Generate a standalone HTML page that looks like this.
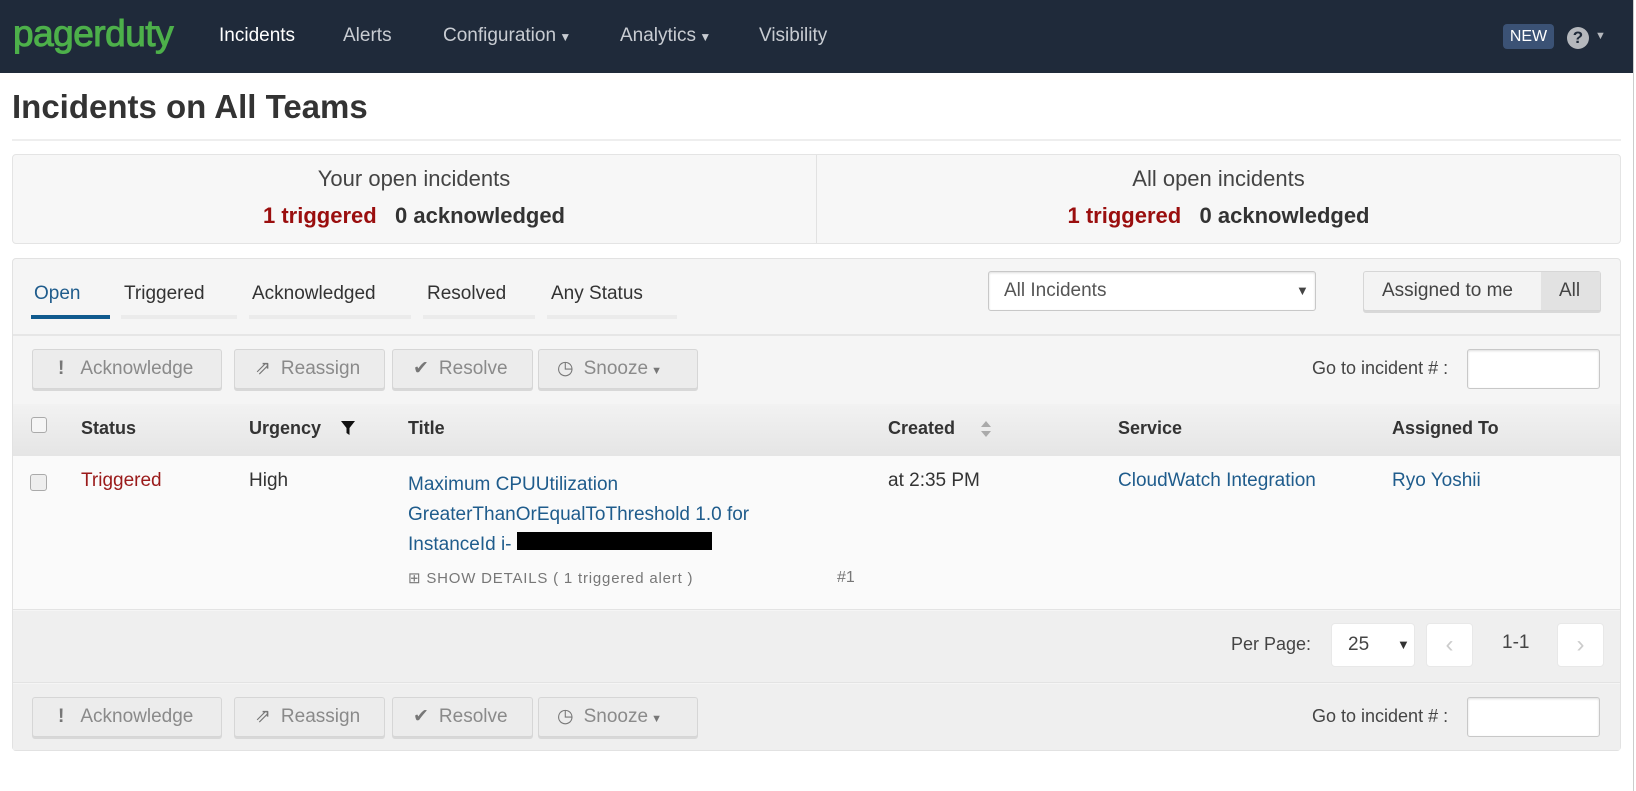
<!DOCTYPE html>
<html><head><meta charset="utf-8"><style>
*{box-sizing:border-box;margin:0;padding:0}
body{width:1636px;height:791px;background:#fff;font-family:"Liberation Sans",sans-serif;color:#333;position:relative;overflow:hidden;font-size:19px}
.a{position:absolute;white-space:nowrap}
.nav{position:absolute;left:0;top:0;width:1633px;height:73px;background:#1f2a3a}
.nl{color:#c8ccd2;font-size:19px;top:25px}
.btn{position:absolute;height:40px;border:1px solid #d6d6d6;border-radius:3px;background:#ececec;box-shadow:0 2px 0 #d8d8d8;color:#8a8a8a;font-size:19px;line-height:38px}
.inp{position:absolute;background:#fff;border:1px solid #c8c8c8;border-radius:3px;box-shadow:inset 0 1px 2px #ddd}
.th{top:418px;font-weight:bold;font-size:18px;color:#333}
.lk{color:#1f5c8c}
</style></head><body>
<div class="nav"></div>
<div class="a" style="left:13px;top:13px;font-size:37px;color:#4db04a;letter-spacing:-0.5px;-webkit-text-stroke:1px #4db04a">pagerduty</div>
<div class="a nl" style="left:219px;color:#fff">Incidents</div>
<div class="a nl" style="left:343px">Alerts</div>
<div class="a nl" style="left:443px">Configuration<span style="font-size:12px"> ▼</span></div>
<div class="a nl" style="left:620px">Analytics<span style="font-size:12px"> ▼</span></div>
<div class="a nl" style="left:759px">Visibility</div>
<div class="a" style="left:1503px;top:24px;width:51px;height:25px;background:#3b5275;border-radius:4px;color:#fff;font-size:16px;text-align:center;line-height:25px">NEW</div>
<div class="a" style="left:1567px;top:27px;width:22px;height:22px;border-radius:50%;background:#b5b8bd;color:#1f2a3a;font-weight:bold;font-size:17px;text-align:center;line-height:22px">?</div>
<div class="a" style="left:1595px;top:30px;font-size:11px;color:#b5b8bd">▼</div>

<div class="a" style="left:12px;top:88px;font-size:33px;font-weight:bold;color:#333">Incidents on All Teams</div>
<div class="a" style="left:12px;top:139px;width:1609px;height:2px;background:#eee"></div>

<div class="a" style="left:12px;top:154px;width:1609px;height:90px;border:1px solid #e4e4e4;border-radius:4px;background:#f7f7f7"></div>
<div class="a" style="left:816px;top:155px;width:1px;height:88px;background:#e2e2e2"></div>
<div class="a" style="left:12px;top:166px;width:804px;text-align:center;font-size:22px;color:#444">Your open incidents</div>
<div class="a" style="left:12px;top:203px;width:804px;text-align:center;font-size:22px;font-weight:bold"><span style="color:#9a0e0e">1 triggered</span>&nbsp;&nbsp; <span>0 acknowledged</span></div>
<div class="a" style="left:816px;top:166px;width:805px;text-align:center;font-size:22px;color:#444">All open incidents</div>
<div class="a" style="left:816px;top:203px;width:805px;text-align:center;font-size:22px;font-weight:bold"><span style="color:#9a0e0e">1 triggered</span>&nbsp;&nbsp; <span>0 acknowledged</span></div>

<div class="a" style="left:12px;top:258px;width:1609px;height:493px;border:1px solid #e2e2e2;border-radius:4px;background:#f5f5f5"></div>
<div class="a" style="left:13px;top:334px;width:1607px;height:2px;background:#e6e6e6"></div>
<div class="a" style="left:34px;top:283px;color:#1f5c8c">Open</div>
<div class="a" style="left:31px;top:315px;width:79px;height:4px;background:#105a8e"></div>
<div class="a" style="left:124px;top:283px">Triggered</div>
<div class="a" style="left:121px;top:315px;width:116px;height:4px;background:#ebebeb"></div>
<div class="a" style="left:252px;top:283px">Acknowledged</div>
<div class="a" style="left:249px;top:315px;width:162px;height:4px;background:#ebebeb"></div>
<div class="a" style="left:427px;top:283px">Resolved</div>
<div class="a" style="left:423px;top:315px;width:112px;height:4px;background:#ebebeb"></div>
<div class="a" style="left:551px;top:283px">Any Status</div>
<div class="a" style="left:547px;top:315px;width:130px;height:4px;background:#ebebeb"></div>

<div class="inp" style="left:988px;top:271px;width:328px;height:40px"></div>
<div class="a" style="left:1004px;top:280px;color:#555">All Incidents</div>
<div class="a" style="left:1296px;top:283px;font-size:13px;color:#444">▼</div>
<div class="btn" style="left:1363px;top:271px;width:238px;color:#444;background:#f3f3f3"></div>
<div class="a" style="left:1382px;top:280px;color:#444">Assigned to me</div>
<div class="a" style="left:1541px;top:272px;width:59px;height:38px;background:#e2e2e2"></div>
<div class="a" style="left:1559px;top:280px;color:#444">All</div>

<div class="btn" style="left:32px;top:349px;width:190px"><b style="margin-left:25px;color:#777">!</b><span style="margin-left:16px">Acknowledge</span></div>
<div class="btn" style="left:234px;top:349px;width:151px"><span style="margin-left:20px;color:#777">⇗</span><span style="margin-left:10px">Reassign</span></div>
<div class="btn" style="left:392px;top:349px;width:141px"><span style="margin-left:20px;color:#777">✔</span><span style="margin-left:10px">Resolve</span></div>
<div class="btn" style="left:538px;top:349px;width:160px"><span style="margin-left:18px;color:#777">◷</span><span style="margin-left:10px">Snooze</span><span style="font-size:11px;color:#777"> ▼</span></div>
<div class="a" style="left:1312px;top:358px;color:#444;font-size:18px">Go to incident # :</div>
<div class="inp" style="left:1467px;top:349px;width:133px;height:40px"></div>

<div class="a" style="left:13px;top:404px;width:1607px;height:52px;background:linear-gradient(#f2f2f2,#e5e5e5)"></div>
<div class="a" style="left:31px;top:417px;width:16px;height:16px;border:1px solid #aaa;border-radius:3px;background:#f5f5f5"></div>
<div class="a th" style="left:81px">Status</div>
<div class="a th" style="left:249px">Urgency</div>
<svg class="a" style="left:340px;top:420px" width="16" height="16" viewBox="0 0 16 16"><path d="M1 1H15L9.5 8V15L6.5 13V8Z" fill="#111"/></svg>
<div class="a th" style="left:408px">Title</div>
<div class="a th" style="left:888px">Created</div>
<svg class="a" style="left:980px;top:420px" width="12" height="18" viewBox="0 0 12 18"><path d="M6 1L11 7H1Z M6 17L11 11H1Z" fill="#aaa"/></svg>
<div class="a th" style="left:1118px">Service</div>
<div class="a th" style="left:1392px">Assigned To</div>

<div class="a" style="left:13px;top:456px;width:1607px;height:154px;background:#fafafa;border-bottom:1px solid #e3e3e3"></div>
<div class="a" style="left:30px;top:474px;width:17px;height:17px;border:1px solid #aaa;border-radius:3px;background:#eee"></div>
<div class="a" style="left:81px;top:470px;color:#9a1a1a">Triggered</div>
<div class="a" style="left:249px;top:470px">High</div>
<div class="a lk" style="left:408px;top:470px;line-height:30px">Maximum CPUUtilization<br>GreaterThanOrEqualToThreshold 1.0 for<br>InstanceId i-</div>
<div class="a" style="left:517px;top:532px;width:195px;height:18px;background:#000"></div>
<div class="a" style="left:408px;top:569px;font-size:15px;color:#777;letter-spacing:0.8px">⊞ SHOW DETAILS ( 1 triggered alert )</div>
<div class="a" style="left:837px;top:569px;font-size:16px;color:#777">#1</div>
<div class="a" style="left:888px;top:470px">at 2:35 PM</div>
<div class="a lk" style="left:1118px;top:470px">CloudWatch Integration</div>
<div class="a lk" style="left:1392px;top:470px">Ryo Yoshii</div>

<div class="a" style="left:13px;top:611px;width:1607px;height:72px;background:#efefef;border-bottom:1px solid #e3e3e3"></div>
<div class="a" style="left:1231px;top:634px;font-size:18px;color:#444">Per Page:</div>
<div class="a" style="left:1331px;top:623px;width:84px;height:44px;background:#fff;border-radius:4px;border:1px solid #e8e8e8"></div>
<div class="a" style="left:1348px;top:634px;color:#444">25</div>
<div class="a" style="left:1397px;top:637px;font-size:13px;color:#333">▼</div>
<div class="a" style="left:1426px;top:623px;width:47px;height:44px;background:#fff;border-radius:4px;border:1px solid #e8e8e8;color:#ccc;text-align:center;line-height:42px;font-size:24px">‹</div>
<div class="a" style="left:1502px;top:632px;color:#444">1-1</div>
<div class="a" style="left:1557px;top:623px;width:47px;height:44px;background:#fff;border-radius:4px;border:1px solid #e8e8e8;color:#ccc;text-align:center;line-height:42px;font-size:24px">›</div>

<div class="a" style="left:13px;top:684px;width:1607px;height:66px;background:#efefef"></div>
<div class="btn" style="left:32px;top:697px;width:190px"><b style="margin-left:25px;color:#777">!</b><span style="margin-left:16px">Acknowledge</span></div>
<div class="btn" style="left:234px;top:697px;width:151px"><span style="margin-left:20px;color:#777">⇗</span><span style="margin-left:10px">Reassign</span></div>
<div class="btn" style="left:392px;top:697px;width:141px"><span style="margin-left:20px;color:#777">✔</span><span style="margin-left:10px">Resolve</span></div>
<div class="btn" style="left:538px;top:697px;width:160px"><span style="margin-left:18px;color:#777">◷</span><span style="margin-left:10px">Snooze</span><span style="font-size:11px;color:#777"> ▼</span></div>
<div class="a" style="left:1312px;top:706px;color:#444;font-size:18px">Go to incident # :</div>
<div class="inp" style="left:1467px;top:697px;width:133px;height:40px"></div>
<div class="a" style="left:1633px;top:0;width:1px;height:791px;background:#ccc"></div>
</body></html>
